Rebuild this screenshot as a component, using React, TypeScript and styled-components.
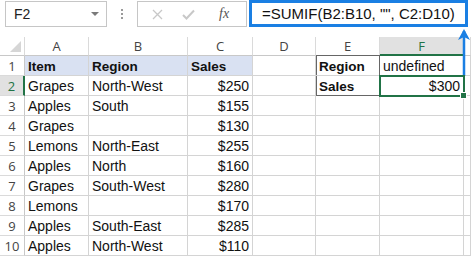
import styled, { createGlobalStyle } from "styled-components";

const Global = createGlobalStyle`
  html, body {
    margin: 0;
    padding: 0;
    background: #fff;
    overflow: hidden;
  }
`;

const Page = styled.div`
  position: relative;
  width: 471px;
  height: 257px;
  overflow: hidden;
  font-family: "Liberation Sans", Arial, sans-serif;
`;

const Toolbar = styled.div`
  height: 37px;
  box-sizing: border-box;
  padding-top: 1px;
  display: flex;
  align-items: flex-start;
`;

const NameBox = styled.div`
  margin-left: 5px;
  width: 102px;
  height: 26px;
  box-sizing: border-box;
  border: 1px solid #c6c6c6;
  display: flex;
  align-items: center;
  justify-content: space-between;
  padding: 0 7px 0 8px;
  font-size: 14px;
  color: #222;
`;

const Caret = styled.span`
  width: 0;
  height: 0;
  border-left: 4px solid transparent;
  border-right: 4px solid transparent;
  border-top: 4px solid #7a7a7a;
`;

const Dots = styled.div`
  width: 30px;
  height: 26px;
  display: flex;
  flex-direction: column;
  align-items: center;
  justify-content: center;
  gap: 2px;
  span {
    width: 2px;
    height: 2px;
    background: #9a9a9a;
  }
`;

const FxButtons = styled.div`
  width: 110px;
  height: 26px;
  box-sizing: border-box;
  border: 1px solid #c6c6c6;
  display: flex;
  align-items: center;
  padding-left: 14px;
  gap: 19px;
`;

const FxLabel = styled.span`
  font-family: "Liberation Serif", "Times New Roman", serif;
  font-style: italic;
  font-size: 14px;
  color: #555;
  margin-left: 5px;
`;

const FormulaBox = styled.div`
  margin-left: 2px;
  width: 219px;
  height: 27px;
  margin-top: -1px;
  box-sizing: border-box;
  border: 3px solid #1a7fe3;
  display: flex;
  align-items: center;
  padding-left: 10px;
  font-size: 15px;
  color: #111;
  white-space: nowrap;
`;

const Sheet = styled.div`
  display: grid;
  grid-template-columns: 25px 64px 99px 65px 63px 64px 84px 7px;
  grid-template-rows: 19px repeat(10, 20px);
`;

const ColHead = styled.div<{ $active?: boolean }>`
  box-sizing: border-box;
  border-right: 1px solid #dadada;
  border-bottom: ${(p) => (p.$active ? "2px solid #217346" : "1px solid #c8c8c8")};
  background: ${(p) => (p.$active ? "#e1e1e1" : "#fff")};
  color: ${(p) => (p.$active ? "#217346" : "#444")};
  font-family: "Open Sans", "Liberation Sans", sans-serif;
  font-size: 13px;
  display: flex;
  align-items: center;
  justify-content: center;
`;

const Corner = styled.div`
  box-sizing: border-box;
  border-right: 1px solid #dadada;
  border-bottom: 1px solid #c8c8c8;
  position: relative;
  &::after {
    content: "";
    position: absolute;
    right: 3px;
    bottom: 3px;
    width: 0;
    height: 0;
    border-left: 11px solid transparent;
    border-bottom: 11px solid #d6d6d6;
  }
`;

const RowHead = styled.div<{ $active?: boolean }>`
  box-sizing: border-box;
  border-right: ${(p) => (p.$active ? "2px solid #217346" : "1px solid #c8c8c8")};
  border-bottom: 1px solid #dadada;
  background: ${(p) => (p.$active ? "#e1e1e1" : "#fff")};
  color: ${(p) => (p.$active ? "#217346" : "#444")};
  font-family: "Open Sans", "Liberation Sans", sans-serif;
  font-size: 13px;
  display: flex;
  align-items: center;
  justify-content: center;
`;

const Cell = styled.div<{
  $bold?: boolean;
  $right?: boolean;
  $fill?: boolean;
  $box?: "top" | "bottom";
  $selected?: boolean;
}>`
  position: relative;
  box-sizing: border-box;
  border-right: 1px solid #d4d4d4;
  border-bottom: 1px solid #d4d4d4;
  background: ${(p) => (p.$fill ? "#d9e1f2" : "#fff")};
  font-size: ${(p) => (p.$bold ? "13.5px" : "14px")};
  font-weight: ${(p) => (p.$bold ? 700 : 400)};
  color: #111;
  display: flex;
  align-items: center;
  justify-content: ${(p) => (p.$right ? "flex-end" : "flex-start")};
  padding: 1px 3px 0 3px;
  white-space: nowrap;
  ${(p) =>
    p.$box &&
    `
    box-shadow: inset 1px 0 0 #666${p.$box === "top" ? ", 0 -1px 0 #666" : ""};
    border-bottom: ${p.$box === "bottom" ? "1px solid #666" : "1px solid #d4d4d4"};
    border-right: 1px solid #666;
  `}
  ${(p) =>
    p.$selected &&
    `
    outline: 2px solid #217346;
    outline-offset: -1px;
    z-index: 1;
  `}
`;

const Handle = styled.span`
  position: absolute;
  right: -4px;
  bottom: -4px;
  width: 5px;
  height: 5px;
  background: #217346;
  border: 1px solid #fff;
  z-index: 2;
`;

const Arrow = styled.svg`
  position: absolute;
  left: 456px;
  top: 27px;
`;

type Row = [string, string, string];

const data: Row[] = [
  ["Grapes", "North-West", "$250"],
  ["Apples", "South", "$155"],
  ["Grapes", "", "$130"],
  ["Lemons", "North-East", "$255"],
  ["Apples", "North", "$160"],
  ["Grapes", "South-West", "$280"],
  ["Lemons", "", "$170"],
  ["Apples", "South-East", "$285"],
  ["Apples", "North-West", "$110"],
];

const cols = ["A", "B", "C", "D", "E", "F"];

export default function App() {
  return (
    <Page>
      <Global />
      <Toolbar>
        <NameBox>
          F2
          <Caret />
        </NameBox>
        <Dots>
          <span />
          <span />
          <span />
        </Dots>
        <FxButtons>
          <svg width="11" height="11" viewBox="0 0 11 11">
            <path d="M1 1 L10 10 M10 1 L1 10" stroke="#c8c8c8" strokeWidth="1.3" />
          </svg>
          <svg width="13" height="11" viewBox="0 0 13 11">
            <path d="M1 6 L4.5 9.5 L12 1.5" stroke="#c8c8c8" strokeWidth="2" fill="none" />
          </svg>
          <FxLabel>fx</FxLabel>
        </FxButtons>
        <FormulaBox>=SUMIF(B2:B10, "", C2:D10)</FormulaBox>
      </Toolbar>
      <Sheet>
        <Corner />
        {cols.map((c) => (
          <ColHead key={c} $active={c === "F"}>
            {c}
          </ColHead>
        ))}
        <ColHead />

        <RowHead>1</RowHead>
        <Cell $fill $bold>Item</Cell>
        <Cell $fill $bold>Region</Cell>
        <Cell $fill $bold>Sales</Cell>
        <Cell />
        <Cell $bold $box="top">Region</Cell>
        <Cell>undefined</Cell>
        <Cell />

        {data.map((r, i) => {
          const n = i + 2;
          return [
            <RowHead key={`h${n}`} $active={n === 2}>{n}</RowHead>,
            <Cell key={`a${n}`}>{r[0]}</Cell>,
            <Cell key={`b${n}`}>{r[1]}</Cell>,
            <Cell key={`c${n}`} $right>{r[2]}</Cell>,
            <Cell key={`d${n}`} />,
            n === 2 ? (
              <Cell key={`e${n}`} $bold $box="bottom">Sales</Cell>
            ) : (
              <Cell key={`e${n}`} />
            ),
            n === 2 ? (
              <Cell key={`f${n}`} $right $selected>
                $300
                <Handle />
              </Cell>
            ) : (
              <Cell key={`f${n}`} />
            ),
            <Cell key={`g${n}`} />,
          ];
        })}
      </Sheet>
      <Arrow width="16" height="50" viewBox="0 0 16 50">
        <path d="M8 49 L8 4" stroke="#1a7fe3" strokeWidth="2.5" />
        <path d="M2 13 L8 2 L14 13 L8 10 Z" fill="#1a7fe3" />
      </Arrow>
    </Page>
  );
}
